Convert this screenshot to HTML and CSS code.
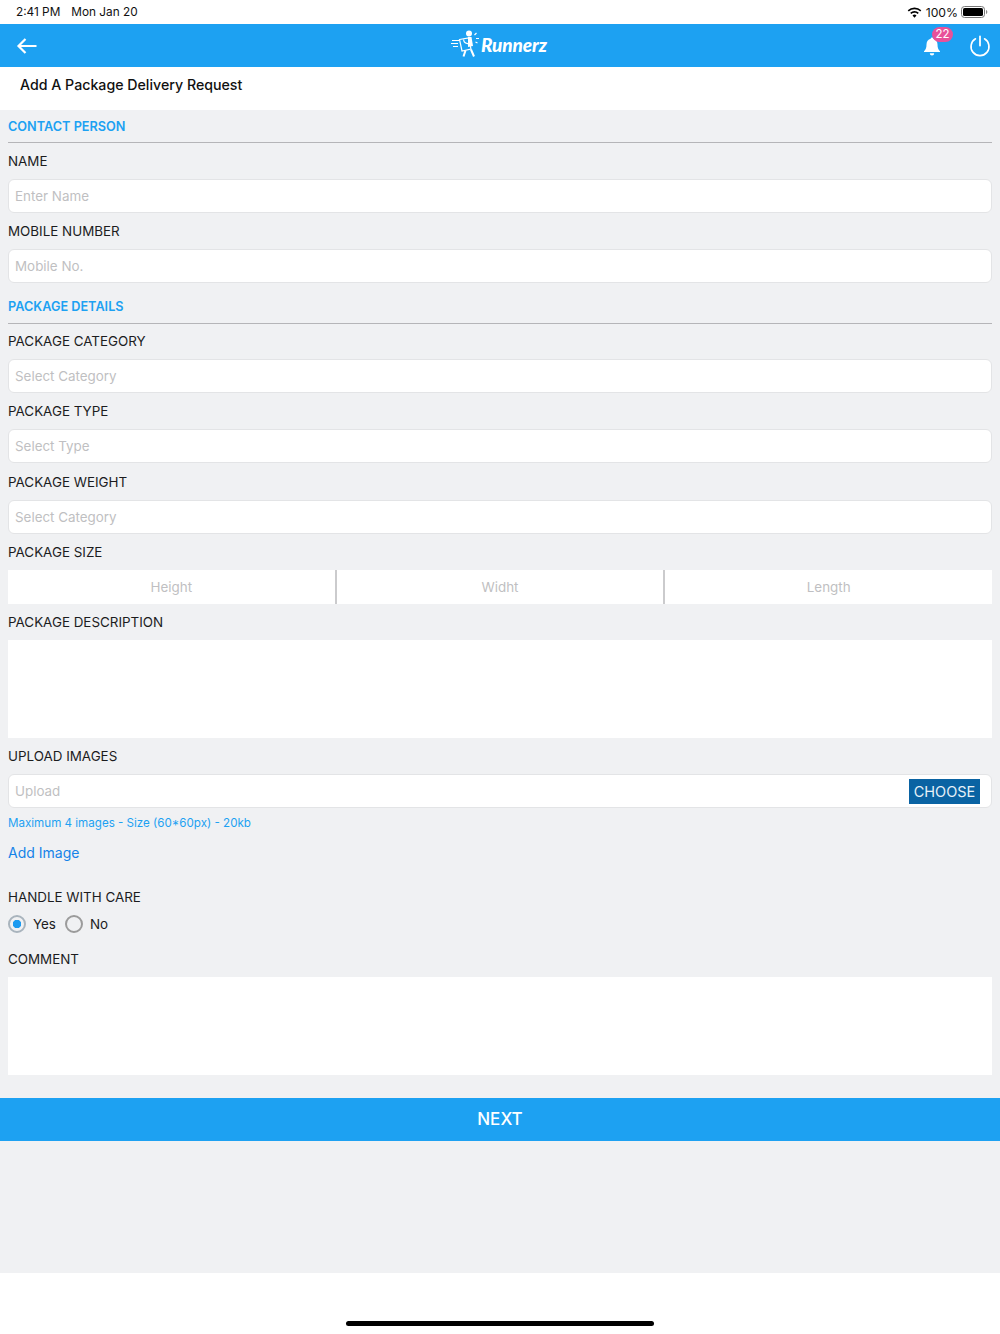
FILE: index.html
```html
<!DOCTYPE html>
<html lang="en">
<head>
<meta charset="utf-8">
<title>Add A Package Delivery Request</title>
<link rel="stylesheet" href="styles.css">
</head>
<body>
<div class="status">
  <span class="status-time">2:41 PM</span><span class="status-date">Mon Jan 20</span>
  <span class="status-right">
    <svg class="wifi" width="15" height="11" viewBox="0 0 15 11"><path d="M7.500 2.200c2.200 0 4.200.9 5.700 2.300l1.100-1.200A9.900 9.900 0 0 0 7.500.6 9.900 9.900 0 0 0 .7 3.300l1.100 1.200a8.300 8.300 0 0 1 5.700-2.300z M7.500 5.700c1.200 0 2.300.5 3.200 1.300l1.100-1.200a6.300 6.300 0 0 0-8.600 0L4.300 7c.9-.8 2-1.300 3.200-1.300z M7.500 10.700 9.500 8.500a2.900 2.900 0 0 0-4 0z" fill="#000"/></svg>
    <span class="status-pct">100%</span>
    <svg width="27" height="12" viewBox="0 0 27 12"><rect x=".5" y=".5" width="23" height="11" rx="3" fill="none" stroke="#777"/><rect x="2" y="2" width="20" height="8" rx="1.600" fill="#000"/><path d="M25 4v4c.8-.3 1.300-1.100 1.300-2S25.800 4.300 25 4z" fill="#888"/></svg>
  </span>
</div>
<header class="topbar">
  <svg class="back" width="22" height="18" viewBox="0 0 22 18"><path d="M20.500 9H2.500M9.500 2 2.500 9l7 7" fill="none" stroke="#fff" stroke-width="2.200"/></svg>
  <div class="logo">
    <svg width="30" height="30" viewBox="0 0 30 30"><g fill="none" stroke="#fff" stroke-width="1.200"><path d="M2 11.500h7M1 14.500h7M3 17.500h5"/><path d="M9.500 10.500l9-1.500 2.500 11-9 2z"/><path d="M13.500 10.500c.5 3 2.500 4.500 5.500 4"/><path d="M24.500 6l2-2M26 9.500h3M25.500 13l2 1"/></g><circle cx="19" cy="4.500" r="3" fill="#fff"/><path d="M18 8h3.500l1.500 9-5 1z" fill="#fff"/><path d="M15.500 21.500l-2 6M21 20.500l3 7" stroke="#fff" stroke-width="2" fill="none"/></svg>
    <span class="logo-text">Runnerz</span>
  </div>
  <div class="bell">
    <svg width="18" height="20" viewBox="0 0 18 20"><path d="M9 1.500c-.8 0-1.300.6-1.300 1.300C5 3.500 3.500 5.800 3.500 8.500c0 3.500-.8 5-2.500 6.800V16h16v-.7c-1.700-1.800-2.500-3.300-2.500-6.800 0-2.700-1.500-5-4.200-5.700 0-.7-.5-1.300-1.300-1.300z" fill="#fff"/><path d="M6.800 17.300h4.400a2.200 2.200 0 0 1-4.400 0z" fill="#fff"/></svg>
    <span class="badge">22</span>
  </div>
  <svg class="power" width="22" height="22" viewBox="0 0 22 22"><path d="M6.500 3.800a9 9 0 1 0 9 0" fill="none" stroke="#fff" stroke-width="1.600" stroke-linecap="round"/><path d="M11 1.500v9" stroke="#fff" stroke-width="1.800" stroke-linecap="round"/></svg>
</header>
<div class="title-row">Add A Package Delivery Request</div>
<main class="content">
  <form class="form">
    <h2 class="section">CONTACT PERSON</h2>
    <div class="field"><div class="label">NAME</div><div class="input">Enter Name</div></div>
    <div class="field"><div class="label">MOBILE NUMBER</div><div class="input">Mobile No.</div></div>
    <h2 class="section section-second">PACKAGE DETAILS</h2>
    <div class="field"><div class="label">PACKAGE CATEGORY</div><div class="input">Select Category</div></div>
    <div class="field"><div class="label">PACKAGE TYPE</div><div class="input">Select Type</div></div>
    <div class="field"><div class="label">PACKAGE WEIGHT</div><div class="input">Select Category</div></div>
    <div class="field"><div class="label">PACKAGE SIZE</div>
      <div class="size-row"><div class="size-cell">Height</div><div class="size-cell">Widht</div><div class="size-cell">Length</div></div>
    </div>
    <div class="field"><div class="label">PACKAGE DESCRIPTION</div><div class="textarea"></div></div>
    <div class="field"><div class="label">UPLOAD IMAGES</div>
      <div class="input input-upload"><span>Upload</span><span class="choose">CHOOSE</span></div>
    </div>
    <div class="hint">Maximum 4 images - Size (60*60px) - 20kb</div>
    <a class="add-image">Add Image</a>
    <div class="label label-care">HANDLE WITH CARE</div>
    <div class="radios">
      <span class="radio radio-on"></span><span class="radio-text">Yes</span>
      <span class="radio"></span><span class="radio-text">No</span>
    </div>
    <div class="field field-comment"><div class="label">COMMENT</div><div class="textarea"></div></div>
  </form>
  <div class="next">NEXT</div>
</main>
<footer class="home"><span class="home-bar"></span></footer>
</body>
</html>
```
FILE: styles.css
```css
* { box-sizing: border-box; }
html, body { margin: 0; padding: 0; }
body {
  width: 1000px;
  height: 1334px;
  display: flex;
  flex-direction: column;
  background: #fff;
  color: #1c1c1e;
  font-family: Inter, "Liberation Sans", sans-serif;
  font-size: 14px;
  overflow: hidden;
}
.status {
  height: 24px;
  flex: none;
  display: flex;
  align-items: center;
  padding: 0 12px 0 16px;
  font-size: 11.800px;
  color: #111;
}
.status-date { margin-left: 11px; }
.status-right { margin-left: auto; display: flex; align-items: center; gap: 3px; }
.status-pct { margin-left: 1px; font-size: 12.200px; }
.topbar {
  height: 43px;
  flex: none;
  background: #1da1f2;
  display: flex;
  align-items: center;
  position: relative;
  padding: 0 9px 0 16px;
}
.logo {
  position: absolute;
  left: 450px;
  top: 5px;
  display: flex;
  align-items: center;
  gap: 1px;
}
.logo-text {
  color: #fff;
  font-family: Lato, sans-serif;
  font-weight: 900;
  font-style: italic;
  font-size: 19px;
  letter-spacing: -.1px;
}
.bell {
  margin-left: auto;
  margin-right: 28px;
  position: relative;
  width: 18px;
  height: 20px;
}
.badge {
  position: absolute;
  left: 9px;
  top: -9px;
  width: 21px;
  height: 15px;
  border-radius: 8px;
  background: #e8519a;
  color: #fff;
  font-size: 11.500px;
  line-height: 15px;
  text-align: center;
}
.title-row {
  height: 43px;
  flex: none;
  padding: 0 0 9px 20px;
  display: flex;
  align-items: center;
  font-size: 14.200px;
  font-weight: 500;
  color: #111;
}
.content {
  flex: none;
  height: 1163px;
  background: #f0f1f3;
}
.form { padding: 0 8px; }
.section {
  margin: 0;
  height: 33px;
  padding-top: 9px;
  font-size: 12.700px;
  line-height: 15px;
  font-weight: 600;
  color: #1da1f2;
  border-bottom: 1px solid #b5b5b8;
}
.section-second { height: 35px; margin-top: 6px; padding-top: 10px; }
.field { margin-top: 9.200px; }
.section + .field { margin-top: 9px; }
.section-second + .field { margin-top: 8px; }
.label {
  font-size: 13.400px;
  line-height: 18px;
  height: 18px;
  margin-bottom: 9px;
  color: #1c1c1e;
}
.input {
  height: 34px;
  background: #fff;
  border: 1px solid #e3e4e6;
  border-radius: 6px;
  padding: 0 6px;
  display: flex;
  align-items: center;
  justify-content: space-between;
  color: #bfbfc2;
  font-size: 13.400px;
}
.input-upload { padding-right: 11px; }
.choose {
  width: 71px;
  height: 25px;
  background: #0a63a3;
  color: #e6f1f8;
  font-size: 14.500px;
  line-height: 25px;
  text-align: center;
}
.size-row { display: flex; height: 34px; background: #fff; }
.size-cell {
  flex: 1;
  display: flex;
  align-items: center;
  justify-content: center;
  color: #bfbfc2;
  font-size: 13.400px;
  border-right: 2px solid #cbcbcd;
}
.size-cell:last-child { border-right: 0; }
.textarea { height: 98px; background: #fff; }
.hint {
  margin-top: 8px;
  font-size: 11.600px;
  line-height: 14px;
  color: #1da1f2;
}
.add-image {
  display: block;
  margin-top: 13.500px;
  font-size: 14px;
  line-height: 18px;
  color: #1583e8;
}
.label-care { margin-top: 26.500px; margin-bottom: 0; }
.radios {
  margin-top: 9px;
  height: 18px;
  display: flex;
  align-items: center;
}
.radio {
  width: 18px;
  height: 18px;
  border-radius: 50%;
  border: 2px solid #9b9b9b;
  background: transparent;
  display: inline-block;
}
.radio-on {
  border-color: #a9b4bd;
  background: radial-gradient(circle, #1d9bf0 0 4px, transparent 4.500px);
}
.radio-text { margin: 0 9px 0 7px; font-size: 13.400px; color: #1c1c1e; }
.field-comment { margin-top: 17px; }
.next {
  margin-top: 23px;
  height: 43px;
  background: #1da1f2;
  color: #fff;
  font-size: 17px;
  font-weight: 500;
  line-height: 43px;
  text-align: center;
}
.home {
  flex: 1;
  display: flex;
  align-items: flex-end;
  justify-content: center;
  padding-bottom: 8px;
}
.home-bar { width: 308px; height: 5px; border-radius: 3px; background: #000; }
```
